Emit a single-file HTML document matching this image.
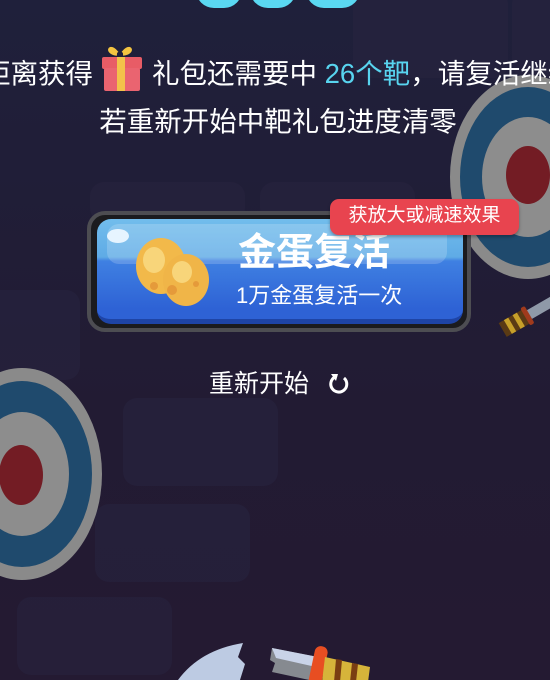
<!DOCTYPE html>
<html><head><meta charset="utf-8"><style>
*{margin:0;padding:0;box-sizing:border-box}
body{width:550px;height:680px;overflow:hidden;position:relative;background:linear-gradient(#1f203b,#221b33 60%,#241a32);font-family:"Liberation Sans","Noto Sans CJK SC",sans-serif;color:#fff}
.bg{position:absolute;background:#28243f;border-radius:14px;opacity:.55}
.t{position:absolute;white-space:nowrap}
</style></head><body>
<div class="bg" style="left:353px;top:-10px;width:155px;height:88px"></div>
<div class="bg" style="left:512px;top:-10px;width:60px;height:88px"></div>
<div class="bg" style="left:90px;top:182px;width:155px;height:40px"></div>
<div class="bg" style="left:260px;top:182px;width:155px;height:40px"></div>
<div class="bg" style="left:-20px;top:290px;width:100px;height:90px"></div>
<div class="bg" style="left:123px;top:398px;width:155px;height:88px"></div>
<div class="bg" style="left:95px;top:504px;width:155px;height:78px"></div>
<div class="bg" style="left:17px;top:597px;width:155px;height:78px"></div>
<svg width="550" height="680" style="position:absolute;left:0;top:0">
<g fill="#5ad8f2"><rect x="196" y="-30" width="46" height="38" rx="18"/><rect x="250" y="-30" width="46" height="38" rx="18"/><rect x="306" y="-30" width="54" height="38" rx="18"/></g>
<g><ellipse cx="528" cy="177" rx="78" ry="102" fill="#8a8a8a"/><ellipse cx="528" cy="177" rx="68" ry="90" fill="#1f4a6d"/><ellipse cx="528" cy="177" rx="46" ry="60" fill="#8d8d8d"/><ellipse cx="528" cy="175" rx="22" ry="29" fill="#731c24"/></g>
<g><ellipse cx="22" cy="474" rx="80" ry="106" fill="#8a8a8a"/><ellipse cx="22" cy="474" rx="70" ry="93" fill="#1f4a6d"/><ellipse cx="22" cy="474" rx="47" ry="62" fill="#8d8d8d"/><ellipse cx="21" cy="475" rx="22" ry="30" fill="#731c24"/></g>
<g transform="translate(520,320) rotate(-30)"><rect x="8" y="-5" width="40" height="10" fill="#8f99a8"/><rect x="-20" y="-8" width="28" height="16" fill="#5a3a14"/><rect x="-14" y="-8" width="5" height="16" fill="#c7a02a"/><rect x="-4" y="-8" width="5" height="16" fill="#c7a02a"/><rect x="6" y="-10" width="5" height="20" rx="2" fill="#a03a1c"/></g>
<path d="M178 680 Q200 650 243 643 L238 657 L245 664 L240 680Z" fill="#bdcbe3"/>
<path d="M272 648 L318 657 L314 681 L272 672 L275 663 L270 660Z" fill="#868a90"/>
<path d="M272 648 L318 657 L316 667 L276 658Z" fill="#c9d3e8"/>
<rect x="313" y="646" width="13" height="40" rx="6" fill="#e84e22" transform="rotate(12 319 660)"/>
<path d="M325 657 L370 667 L368 682 L322 682Z" fill="#d6b43a"/>
<path d="M336 659 L342 660 L340 682 L334 682Z M352 663 L358 664 L356 682 L350 682Z" fill="#7a3e12"/>
</svg>
<div class="t" style="left:-17px;top:57px;font-size:27.5px;line-height:34px">距离获得<span style="display:inline-block;width:59px"></span>礼包还需要中 <span style="color:#58d4ef">26个靶</span>，请复活继续</div>
<svg width="44" height="52" style="position:absolute;left:100px;top:42px"><path d="M17 11 C9 1 6 11 17 12 M23 11 C31 1 34 11 23 12" stroke="#f4c440" stroke-width="3.5" fill="none"/><rect x="2" y="15" width="40" height="12" rx="2" fill="#e85c66"/><rect x="4" y="26" width="36" height="23" rx="2" fill="#ea6470"/><rect x="17" y="15" width="8" height="34" fill="#f3c24a"/></svg>
<div class="t" style="left:0;width:556px;text-align:center;top:105px;font-size:27.5px;line-height:34px">若重新开始中靶礼包进度清零</div>
<div style="position:absolute;left:87px;top:211px;width:384px;height:121px;border-radius:18px;background:#1b1b1e;border:4px solid #4d4d52"></div>
<div style="position:absolute;left:97px;top:219px;width:366px;height:105px;border-radius:14px;background:linear-gradient(#72bdec 0%,#5fabe6 38%,#3f80e2 42%,#2e62d5 90%);border-bottom:5px solid #1e44a6;overflow:hidden">
<div style="position:absolute;left:10px;top:5px;width:340px;height:40px;border-radius:12px;background:rgba(255,255,255,.18)"></div>
<div style="position:absolute;left:10px;top:10px;width:22px;height:14px;border-radius:50%;background:#e6f4ff"></div>
</div>
<svg width="80" height="70" style="position:absolute;left:134px;top:238px"><ellipse cx="27" cy="28" rx="25" ry="28" fill="#f2b94a"/><ellipse cx="20" cy="22" rx="11" ry="13" fill="#f8d57a"/><ellipse cx="52" cy="42" rx="23" ry="26" fill="#f0b548"/><ellipse cx="48" cy="34" rx="10" ry="11" fill="#f8d57a"/><circle cx="38" cy="52" r="5" fill="#e59a3a"/><circle cx="62" cy="46" r="3" fill="#e59a3a"/><circle cx="20" cy="48" r="4" fill="#e59a3a"/></svg>
<div class="t" style="left:238px;top:230px;font-size:38px;font-weight:bold;line-height:46px">金蛋复活</div>
<div class="t" style="left:236px;top:282px;font-size:22px;line-height:28px">1万金蛋复活一次</div>
<div class="t" style="left:330px;top:199px;width:189px;height:36px;background:#e8444f;border-radius:9px;font-size:19px;line-height:34px;text-align:center;box-shadow:0 2px 3px rgba(0,0,0,.3)">获放大或减速效果</div>
<div class="t" style="left:209px;top:369px;font-size:25px;line-height:30px">重新开始</div>
<svg width="24" height="24" style="position:absolute;left:327px;top:372px"><path d="M8 5 A8 8 0 1 0 17 6" stroke="#fff" stroke-width="3" fill="none"/><path d="M4 2 L11 2 L9 9Z" fill="#fff"/></svg>
</body></html>
